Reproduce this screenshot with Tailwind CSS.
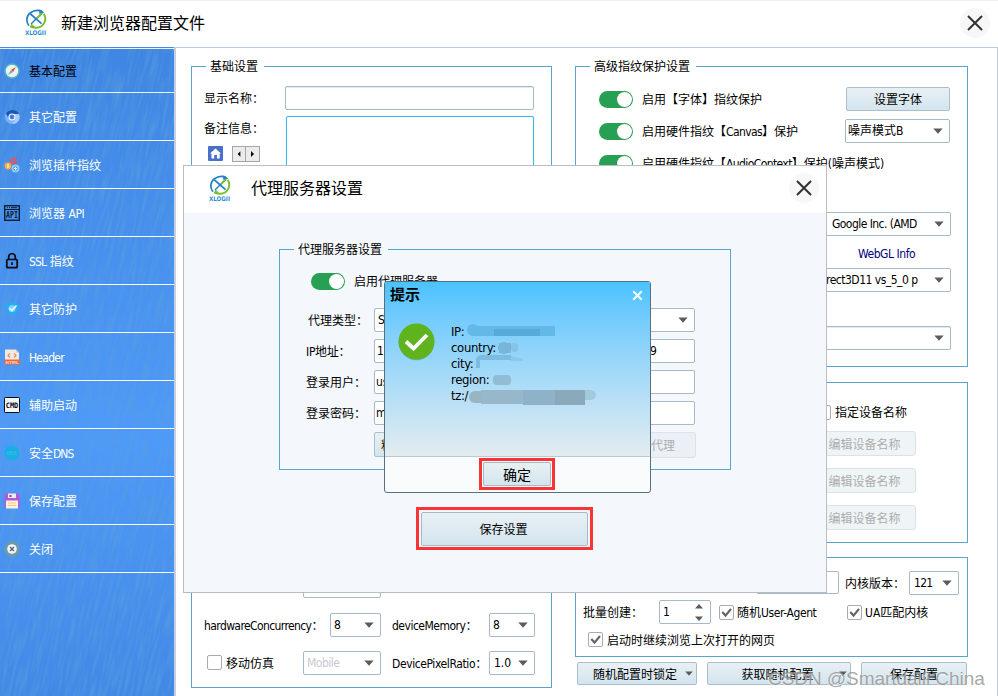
<!DOCTYPE html>
<html lang="zh-CN">
<head>
<meta charset="utf-8">
<title>新建浏览器配置文件</title>
<script src="https://cdn.jsdelivr.net/npm/@tailwindcss/browser@4"></script>
</head>
<body class="relative h-[696px] w-[998px] overflow-hidden bg-white font-['DejaVu_Sans_Condensed','Noto_Sans_CJK_SC',sans-serif] text-[12px] leading-[16px] whitespace-nowrap text-black [&_button:not(:has(svg))]:pt-[2px] [&_label]:pt-[2px] [&_legend]:pt-px [&_span[class*=ml-]]:pt-[2px]">

<svg class="hidden">
  <symbol id="logo" viewBox="0 0 24 27">
    <path d="M5 16.800A8.900 8.900 0 0 1 6.500 3.800Q12 -.2 18 2.600" fill="none" stroke="#2480c4" stroke-width="1.700"/>
    <path d="M15.500.200l5 3.200-5.400 1.400z" fill="#2480c4"/>
    <path d="M19.700 4.800A8.900 8.900 0 0 1 12 18.700Q8 18.700 6.500 17" fill="none" stroke="#79bd2c" stroke-width="1.900"/>
    <path d="M7.500 14.500l4.500 4.700-6-.7z" fill="#79bd2c"/>
    <path d="M6.500 5l11 9.700" stroke="#2480c4" stroke-width="1.700"/>
    <path d="M17.500 4.500L7 15" stroke="#2480c4" stroke-width="1.500"/>
    <path d="M13 9.200L18.500 4.200" stroke="#79bd2c" stroke-width="1.700"/>
    <text x="1" y="25.500" font-family="DejaVu Sans" font-weight="bold" font-size="6.300" textLength="21" lengthAdjust="spacingAndGlyphs" fill="#2f8fd0">XLOGII</text>
  </symbol>
  <symbol id="down" viewBox="0 0 10 6"><path d="M.3.500h9.400L5 5.700z" fill="#5c5c5c"/></symbol>
  <symbol id="tick" viewBox="0 0 15 15"><path d="M3.300 7l3.200 3.600L12 4" fill="none" stroke="#666" stroke-width="2.200"/></symbol>
  <symbol id="cross" viewBox="0 0 16 16"><path d="M1 1l14 14M15 1L1 15" stroke="#333" stroke-width="2"/></symbol>
</svg>

<header class="flex h-[47px] items-center border-t border-[#eee] bg-white">
  <svg class="mt-[-3px] ml-[24px] h-[27px] w-[24px]"><use href="#logo"/></svg>
  <h1 class="ml-[13px] text-[16px] leading-[24px]">新建浏览器配置文件</h1>
  <button class="mt-[-3px] mr-[8px] ml-auto flex size-[30px] items-center justify-center rounded-full bg-[#f7f7f7]"><svg class="size-[16px]"><use href="#cross"/></svg></button>
</header>

<div class="flex h-[649px]">
  <aside class="relative w-[174px] bg-linear-to-b from-[#3f86e2] via-[#4e9af9] via-60% to-[#4289e6]">
    <svg class="absolute inset-0 h-[649px] w-[174px]">
      <filter id="brush" x="0" y="0" width="100%" height="100%">
        <feTurbulence type="fractalNoise" baseFrequency="0.32 0.03" numOctaves="3" seed="8"/>
        <feColorMatrix values="0 0 0 0 .1  0 0 0 0 .34  0 0 0 0 .74  2 0 0 0 -.8"/>
      </filter>
      <rect x="-20" y="-60" width="420" height="780" filter="url(#brush)" transform="rotate(13)" opacity=".75"/>
    </svg>
    <nav class="relative pt-px text-white">
      <a class="flex h-[45px] items-center border-y border-white/90 pl-[4px] text-black">
        <svg class="size-[16px]" viewBox="0 0 16 16"><circle cx="8" cy="8" r="7" fill="#e8f3f3" stroke="#54b4bd" stroke-width="1.500"/><path d="M12 4L9 9 7 7z" fill="#e4443c"/><path d="M4 12l3-5 2 2z" fill="#8fa0a8"/></svg>
        <span class="ml-[9px]">基本配置</span></a>
      <a class="flex h-[48px] items-center border-b border-white pl-[4px]">
        <svg class="size-[16px]" viewBox="0 0 16 16"><circle cx="8" cy="8" r="7" fill="#7fb0f8"/><path d="M2 4.500A7.500 7.500 0 0 1 15 5H8a3.500 3.500 0 0 0-3.300 4.700z" fill="#1d57b4"/><path d="M15 5a7 7 0 0 1-6.500 10l3-5A4 4 0 0 0 10 5z" fill="#a9cbfb"/><circle cx="8" cy="8" r="3.500" fill="#fff"/><circle cx="8" cy="8" r="2.400" fill="#3b7de4"/></svg>
        <span class="ml-[9px]">其它配置</span></a>
      <a class="flex h-[48px] items-center border-b border-white pl-[4px]">
        <svg class="size-[16px]" viewBox="0 0 16 16"><circle cx="9.500" cy="4" r="2.500" fill="none" stroke="#e25563" stroke-width="2.200"/><circle cx="4" cy="9" r="3.400" fill="#f6b040"/><path d="M4 7v4" stroke="#fff0c8" stroke-width="1.300"/><circle cx="11.500" cy="11.500" r="3" fill="#3c8fe0" stroke="#8ccbfb" stroke-width="2"/><path d="M11.500 10v3M10 11.500h3" stroke="#e0f2ff"/></svg>
        <span class="ml-[9px]">浏览插件指纹</span></a>
      <a class="flex h-[48px] items-center border-b border-white pl-[4px]">
        <svg class="size-[16px]" viewBox="0 0 16 16"><rect x=".7" y=".7" width="14.600" height="14.600" fill="none" stroke="#0b1d33" stroke-width="1.400"/><path d="M1 4.500h14M3 2.700h1M5 2.700h1M7 2.700h6" stroke="#0b1d33"/><text x="8" y="12.800" text-anchor="middle" font-family="DejaVu Sans Mono" font-weight="bold" font-size="8" textLength="12" lengthAdjust="spacingAndGlyphs" fill="#0b1d33">API</text></svg>
        <span class="ml-[9px]">浏览器 <i class="not-italic tracking-[-0.4px]">API</i></span></a>
      <a class="flex h-[48px] items-center border-b border-white pl-[4px]">
        <svg class="size-[16px]" viewBox="0 0 16 16"><rect x="2.800" y="6.500" width="10.400" height="8.200" rx=".8" fill="none" stroke="#0c0c10" stroke-width="1.700"/><path d="M4.700 6.500V4a3.300 3.300 0 0 1 6.600 0v2.500" fill="none" stroke="#0c0c10" stroke-width="1.700"/><path d="M8 9.300v2.600" stroke="#0c0c10" stroke-width="1.700"/></svg>
        <span class="ml-[9px]"><i class="not-italic tracking-[-0.8px]">SSL</i> 指纹</span></a>
      <a class="flex h-[48px] items-center border-b border-white pl-[4px]">
        <svg class="size-[16px]" viewBox="0 0 16 16"><path d="M8 1c2 1.500 4.500 2 7 2-.2 6-2 9.800-7 12C3 12.800 1.200 9 1 3c2.500 0 5-.5 7-2z" fill="#29aaf5"/><circle cx="8" cy="7.500" r="3.500" fill="#7fd0fb"/><path d="M5.500 7.300L7.800 9.500 12.500 4.500" fill="none" stroke="#e8f7ff" stroke-width="1.700"/></svg>
        <span class="ml-[9px]">其它防护</span></a>
      <a class="flex h-[48px] items-center border-b border-white pl-[4px]">
        <svg class="size-[16px]" viewBox="0 0 16 16"><path d="M1 .5h11L15 3.500v8H1z" fill="#efe9e2"/><path d="M12 .5l3 3h-3z" fill="#cfc5bb"/><path d="M6 4.500L4 6.500l2 2M10 4.500l2 2-2 2" fill="none" stroke="#e98a55" stroke-width="1.200"/><rect x=".3" y="10.500" width="15.400" height="5" fill="#ee6a3c"/><text x="8" y="14.800" text-anchor="middle" font-family="DejaVu Sans" font-weight="bold" font-size="4.200" fill="#fbd4c2">HTML</text></svg>
        <span class="ml-[9px] tracking-[-0.75px]">Header</span></a>
      <a class="flex h-[48px] items-center border-b border-white pl-[4px]">
        <svg class="size-[16px]" viewBox="0 0 16 16"><rect x=".5" y=".5" width="15" height="15" rx=".8" fill="#f1f4f8" stroke="#0a0a0a"/><text x="8" y="10.700" text-anchor="middle" font-family="DejaVu Sans Mono" font-weight="bold" font-size="7.400" textLength="12.500" lengthAdjust="spacingAndGlyphs" fill="#0a0a0a">CMD</text></svg>
        <span class="ml-[9px]">辅助启动</span></a>
      <a class="flex h-[48px] items-center border-b border-white pl-[4px]">
        <svg class="size-[16px]" viewBox="0 0 16 16"><circle cx="8" cy="8" r="6.600" fill="#2ba3ea" stroke="#12b5de" stroke-width="1.800" stroke-dasharray="4 1"/><path d="M3 3.500h10M3 12.500h10M8 1v3M8 12v3" stroke="#12b5de"/><text x="8" y="10" text-anchor="middle" font-family="DejaVu Sans Mono" font-weight="bold" font-size="5.500" fill="#13cde2">DNS</text></svg>
        <span class="ml-[9px]">安全<i class="not-italic tracking-[-1px]">DNS</i></span></a>
      <a class="flex h-[48px] items-center border-b border-white pl-[4px]">
        <svg class="size-[16px]" viewBox="0 0 16 16"><path d="M.7 1.500Q.7.500 1.700.500H14l1.500 1.500v12q0 1-1 1H1.700q-1 0-1-1z" fill="#b558d0"/><rect x="4" y=".5" width="8" height="4.500" fill="#ece9f2"/><rect x="5.500" y="2" width="2" height="2" fill="#7a4b96"/><rect x="2" y="7.500" width="12" height="8" fill="#fbf1dc"/><path d="M4 10h8M4 12.500h8" stroke="#f3c888"/></svg>
        <span class="ml-[9px]">保存配置</span></a>
      <a class="flex h-[48px] items-center border-b border-white pl-[4px]">
        <svg class="size-[16px]" viewBox="0 0 16 16"><circle cx="8" cy="8" r="7.800" fill="#6f98ab"/><circle cx="8" cy="8" r="4.800" fill="#f4f6f7"/><path d="M6 6l4 4M10 6l-4 4" stroke="#5b6b75" stroke-width="1.500"/></svg>
        <span class="ml-[9px]">关闭</span></a>
    </nav>
  </aside>

  <main class="flex flex-1 border-t border-r border-l-2 border-[#bccbdc] border-l-[#c6d0e4] pt-[10px] pl-[15px]">
    <fieldset class="h-[630px] w-[361px] border border-[#55a5cd]">
      <legend class="ml-[14px] h-[17px] pr-[6px] pl-[4px] leading-[17px]">基础设置</legend>
      <div class="flex h-[612px] flex-col justify-between pt-[11px] pb-[12px] pl-[12px]">
        <div>
          <div class="flex h-[24px] items-center">
            <label class="w-[81px]">显示名称：</label>
            <div class="h-[24px] w-[249px] rounded-[2px] border border-[#a5b9c6] shadow-[inset_0_1px_0_#e4eaee]"></div>
          </div>
          <div class="mt-[6px] flex">
            <div class="w-[82px] pt-[5px]">
              <label>备注信息：</label>
              <div class="mt-[9px] flex pl-[4px]">
                <svg class="size-[15px]" viewBox="0 0 15 15"><rect width="15" height="15" rx="1" fill="#4a6fcd"/><path d="M7.500 2.500L13 7.500h-1.300V12.500H9V9H6.200v3.500H3.500v-5H2z" fill="#fff"/></svg>
                <div class="ml-[9px] flex h-[16px] w-[28px] border border-[#a6a6a6] bg-[#ececec]">
                  <svg class="h-[14px] w-[13px] border-r border-[#a6a6a6]" viewBox="0 0 13 14"><path d="M8 4v6L5 7z"/></svg>
                  <svg class="h-[14px] w-[13px]" viewBox="0 0 13 14"><path d="M5 4v6l3-3z"/></svg>
                </div>
              </div>
            </div>
            <div class="h-[64px] w-[248px] rounded-[2px] border border-[#38b4ee] shadow-[0_0_1px_#8fd6f7]"></div>
          </div>
        </div>
        <div>
          <div class="flex h-[24px]">
            <div class="ml-[99px] h-[25px] w-[78px] rounded-[2px] border border-[#a5b9c6]"></div>
            <div class="mt-[5px] ml-[32px] size-[15px] rounded-[2px] border border-[#aaa]"></div>
          </div>
          <div class="mt-[16px] flex h-[24px] items-center">
            <label class="w-[126px]"><i class="not-italic tracking-[-0.6px]">hardwareConcurrency</i>：</label>
            <div class="flex h-[24px] w-[51px] items-center justify-between rounded-[2px] border border-[#a5b9c6] pr-[6px] pl-[3px]"><span>8</span><svg class="h-[6px] w-[10px]"><use href="#down"/></svg></div>
            <label class="ml-[11px] w-[97px]"><i class="not-italic tracking-[-0.5px]">deviceMemory</i>：</label>
            <div class="flex h-[24px] w-[46px] items-center justify-between rounded-[2px] border border-[#a5b9c6] pr-[6px] pl-[3px]"><span>8</span><svg class="h-[6px] w-[10px]"><use href="#down"/></svg></div>
          </div>
          <div class="mt-[13px] flex h-[25px] items-center">
            <div class="ml-[3px] size-[15px] rounded-[2px] border border-[#aaa]"></div>
            <label class="ml-[4px] w-[77px]">移动仿真</label>
            <div class="flex h-[24px] w-[78px] items-center justify-between rounded-[2px] border border-[#a5b9c6] pr-[6px] pl-[3px]"><span class="tracking-[-0.5px] text-[#c8c8cf]">Mobile</span><svg class="h-[6px] w-[10px]"><use href="#down"/></svg></div>
            <label class="ml-[11px] w-[97px]"><i class="not-italic tracking-[-0.4px]">DevicePixelRatio</i>：</label>
            <div class="flex h-[24px] w-[46px] items-center justify-between rounded-[2px] border border-[#a5b9c6] pr-[6px] pl-[4px]"><span>1.0</span><svg class="h-[6px] w-[10px]"><use href="#down"/></svg></div>
          </div>
        </div>
      </div>
    </fieldset>

    <div class="ml-[23px] w-[393px]">
      <fieldset class="h-[309px] border border-[#55a5cd]">
        <legend class="ml-[14px] h-[17px] pr-[6px] pl-[4px] leading-[17px]">高级指纹保护设置</legend>
        <div class="pt-[12px] pr-[16px] pl-[23px]">
          <div class="flex h-[24px] items-center">
            <div class="flex h-[17px] w-[34px] justify-end rounded-full bg-[#28a053] p-px"><div class="size-[15px] rounded-full bg-white"></div></div>
            <span class="ml-[9px]">启用【字体】指纹保护</span>
            <button class="ml-auto h-[24px] w-[104px] mr-px rounded-[2px] border border-[#a9bfcd] bg-linear-to-b from-[#e9f0f4] to-[#d3e5ee]">设置字体</button>
          </div>
          <div class="mt-[8px] flex h-[24px] items-center">
            <div class="flex h-[17px] w-[34px] justify-end rounded-full bg-[#28a053] p-px"><div class="size-[15px] rounded-full bg-white"></div></div>
            <span class="ml-[9px]">启用硬件指纹【<i class="not-italic tracking-[-0.6px]">Canvas</i>】保护</span>
            <div class="mr-px ml-auto flex h-[24px] w-[105px] items-center justify-between rounded-[2px] border border-[#a5b9c6] pr-[6px] pl-[2px]"><span>噪声模式B</span><svg class="h-[6px] w-[10px]"><use href="#down"/></svg></div>
          </div>
          <div class="mt-[8px] flex h-[24px] items-center">
            <div class="flex h-[17px] w-[34px] justify-end rounded-full bg-[#28a053] p-px"><div class="size-[15px] rounded-full bg-white"></div></div>
            <span class="ml-[9px]">启用硬件指纹【<i class="not-italic tracking-[-0.6px]">AudioContext</i>】保护(噪声模式)</span>
          </div>
          <div class="mt-[37px] ml-auto flex h-[24px] w-[134px] items-center justify-between rounded-[2px] border border-[#a5b9c6] pr-[6px] pl-[14px]"><span class="tracking-[-0.55px]">Google Inc. (AMD</span><svg class="h-[6px] w-[10px]"><use href="#down"/></svg></div>
          <div class="mt-[10px] pl-[259px] tracking-[-0.45px] text-[#000080]">WebGL Info</div>
          <div class="mt-[6px] ml-auto flex h-[24px] w-[134px] items-center justify-between rounded-[2px] border border-[#a5b9c6] pr-[6px] pl-[8px]"><span class="tracking-[-0.5px]">rect3D11 vs_5_0 p</span><svg class="h-[6px] w-[10px]"><use href="#down"/></svg></div>
          <div class="mt-[34px] ml-auto flex h-[24px] w-[134px] items-center justify-end rounded-[2px] border border-[#a5b9c6] pr-[6px] shadow-[inset_0_1px_0_#e4eaee]"><svg class="h-[6px] w-[10px]"><use href="#down"/></svg></div>
        </div>
      </fieldset>

      <section class="mt-[15px] flex h-[161px] flex-col border border-[#55a5cd] pt-[21px] pl-[237px]">
        <div class="flex h-[17px] items-center pl-[3px]">
          <div class="size-[15px] rounded-[2px] border border-[#aaa]"></div><span class="ml-[4px] mt-[-2px]">指定设备名称</span>
        </div>
        <button class="mt-[10px] h-[25px] w-[103px] rounded-[3px] border border-[#dbe3e8] bg-[#eff4f7] text-[#adadad]">编辑设备名称</button>
        <button class="mt-[12px] h-[25px] w-[103px] rounded-[3px] border border-[#dbe3e8] bg-[#eff4f7] text-[#adadad]">编辑设备名称</button>
        <button class="mt-[12px] h-[25px] w-[103px] rounded-[3px] border border-[#dbe3e8] bg-[#eff4f7] text-[#adadad]">编辑设备名称</button>
      </section>

      <section class="mt-[14px] h-[100px] border border-[#55a5cd] pt-[12px]">
        <div class="flex h-[26px] items-center pr-[8px]">
          <div class="mt-[-2px] ml-[180px] h-[23px] w-[83px] rounded-[2px] border border-[#a5b9c6]"></div>
          <label class="ml-[6px]">内核版本：</label>
          <div class="ml-auto flex h-[24px] w-[50px] items-center justify-between rounded-[2px] border border-[#a5b9c6] pr-[6px] pl-[4px]"><span class="tracking-[-0.7px]">121</span><svg class="h-[6px] w-[10px]"><use href="#down"/></svg></div>
        </div>
        <div class="mt-[4px] flex h-[24px] items-center pl-[7px]">
          <label class="w-[76px]">批量创建：</label>
          <div class="flex h-[24px] w-[52px] items-center justify-between rounded-[2px] border border-[#a5b9c6] pr-[7px] pl-[3px]"><span>1</span>
            <svg class="h-[17px] w-[8px]" viewBox="0 0 8 17"><path d="M0 4.500h8L4 0zM0 12.500h8L4 17z" fill="#5c5c5c"/></svg></div>
          <div class="ml-[8px] size-[15px] rounded-[2px] border border-[#aaa]"><svg class="-m-px size-[15px]"><use href="#tick"/></svg></div>
          <span class="ml-[3px] w-[110px]">随机<i class="not-italic tracking-[-0.4px]">User-Agent</i></span>
          <div class="size-[15px] rounded-[2px] border border-[#aaa]"><svg class="-m-px size-[15px]"><use href="#tick"/></svg></div>
          <span class="ml-[3px]">UA匹配内核</span>
        </div>
        <div class="mt-[7px] flex h-[17px] items-center pl-[12px]">
          <div class="size-[15px] rounded-[2px] border border-[#aaa]"><svg class="-m-px size-[15px]"><use href="#tick"/></svg></div>
          <span class="ml-[4px]">启动时继续浏览上次打开的网页</span>
        </div>
      </section>

      <div class="mt-[5px] flex h-[23px] gap-[10px] pl-[2px]">
        <button class="flex w-[120px] items-center rounded-[2px] border border-[#a9bfcd] bg-linear-to-b from-[#e9f0f4] to-[#d3e5ee] pr-[3px]"><span class="flex-1 pt-[2px] pl-[7px]">随机配置时锁定</span><svg class="h-[5px] w-[8px]" viewBox="0 0 10 6"><path d="M.3.500h9.400L5 5.700z" fill="#5c5c5c"/></svg></button>
        <button class="flex w-[144px] items-center rounded-[2px] border border-[#a9bfcd] bg-linear-to-b from-[#e9f0f4] to-[#d3e5ee] pr-[3px]"><span class="flex-1 pt-[2px] pl-[8px]">获取随机配置</span><svg class="h-[5px] w-[8px]" viewBox="0 0 10 6"><path d="M.3.500h9.400L5 5.700z" fill="#5c5c5c"/></svg></button>
        <button class="w-[106px] rounded-[2px] border border-[#a9bfcd] bg-linear-to-b from-[#e9f0f4] to-[#d3e5ee]">保存配置</button>
      </div>
    </div>
  </main>
</div>

<div class="absolute top-[667px] left-[768px] font-['Liberation_Sans',sans-serif] text-[19px] leading-[24px] tracking-[-0.05px] text-[#8a8a8a]/75 [text-shadow:0_1px_1px_#ffffffb0]">CSDN @Smartdaili China</div>

<section class="absolute top-[165px] left-[183px] h-[428px] w-[644px] border border-[#b9bdc1] bg-[#f4f7fc]">
  <header class="flex h-[47px] items-center bg-white">
    <svg class="mt-[-3px] ml-[24px] h-[27px] w-[24px]"><use href="#logo"/></svg>
    <h2 class="mt-[-2px] ml-[19px] text-[16px] leading-[24px]">代理服务器设置</h2>
    <button class="mt-[-3px] mr-[7px] ml-auto flex size-[30px] items-center justify-center rounded-full bg-[#f7f7f7]"><svg class="size-[16px]"><use href="#cross"/></svg></button>
  </header>
  <fieldset class="mt-[28px] ml-[95px] h-[229px] w-[452px] border border-[#55a5cd]">
    <legend class="ml-[14px] h-[17px] pr-[6px] pl-[4px] leading-[17px]">代理服务器设置</legend>
    <div class="pl-[26px]">
      <div class="flex h-[46px] items-center pl-[5px]">
        <div class="flex h-[17px] w-[34px] justify-end rounded-full bg-[#28a053] p-px"><div class="size-[15px] rounded-full bg-white"></div></div>
        <span class="ml-[9px]">启用代理服务器</span>
      </div>
      <div class="mt-[3px] flex h-[25px] items-center">
        <label class="w-[68px] pl-[2px]">代理类型：</label>
        <div class="flex h-[24px] w-[321px] items-center justify-between rounded-[2px] border border-[#a5b9c6] bg-white pr-[6px] pl-[3px]"><span>SOCKS5</span><svg class="h-[6px] w-[10px]"><use href="#down"/></svg></div>
      </div>
      <div class="mt-[7px] flex h-[24px] items-center">
        <label class="w-[68px] tracking-[-0.3px]">IP地址：</label>
        <div class="flex h-[24px] w-[210px] items-center rounded-[2px] border border-[#a5b9c6] bg-white pl-[2px]">127.0.0.1</div>
        <div class="ml-[11px] flex h-[24px] w-[100px] items-center rounded-[2px] border border-[#a5b9c6] bg-white pl-[54px]">9</div>
      </div>
      <div class="mt-[7px] flex h-[24px] items-center">
        <label class="w-[68px]">登录用户：</label>
        <div class="flex h-[24px] w-[321px] items-center rounded-[2px] border border-[#a5b9c6] bg-white pl-px">user</div>
      </div>
      <div class="mt-[7px] flex h-[24px] items-center">
        <label class="w-[68px]">登录密码：</label>
        <div class="flex h-[24px] w-[321px] items-center rounded-[2px] border border-[#a5b9c6] bg-white pl-px">m</div>
      </div>
      <div class="mt-[7px] flex h-[26px] justify-between pr-[34px] pl-[68px]">
        <button class="h-[25px] w-[90px] rounded-[2px] border border-[#a9bfcd] bg-linear-to-b from-[#e9f0f4] to-[#d3e5ee] pl-[6px] text-left">粘贴代理</button>
        <button class="h-[26px] w-[90px] rounded-[3px] border border-[#dbe3e8] bg-[#eaf0f6] pr-[20px] text-right text-[#adadad]">检测代理</button>
      </div>
    </div>
  </fieldset>
  <div class="mt-[37px] ml-[232px] h-[43px] w-[177px] border-3 border-[#fa3434] p-[2px]">
    <button class="h-[34px] w-full rounded-[2px] border border-[#a9b9c3] bg-linear-to-b from-[#e9f0f4] to-[#d3e5ee] pr-[2px]">保存设置</button>
  </div>
</section>

<section class="absolute top-[281px] left-[384px] flex h-[212px] w-[267px] flex-col overflow-hidden rounded-[3px] border border-[#55707f] bg-[#fafbfc]">
  <div class="h-[175px] border-b border-[#b7cad6] bg-linear-to-b from-[#49c2ff] to-[#e3ecf0]">
    <div class="flex h-[26px] items-center justify-between pr-[7px] pl-[5px]">
      <h3 class="text-[15px] leading-[20px] font-bold">提示</h3>
      <svg class="size-[11px]" viewBox="0 0 11 11"><path d="M1.200 1.200l8.600 8.600M9.800 1.200L1.200 9.800" stroke="#f2fbff" stroke-width="2.200"/></svg>
    </div>
    <div class="flex pl-[13px]">
      <svg class="mt-[15px] h-[38px] w-[37px]" viewBox="0 0 37 38"><circle cx="18.500" cy="19.500" r="17.800" fill="#447f7f" opacity=".45"/><circle cx="18.500" cy="18.500" r="18" fill="#5fb31c"/><path d="M8 18.500l7.500 7L29 12" fill="none" stroke="#fff" stroke-width="3.800"/></svg>
      <div class="relative ml-[16px] pt-[16px] text-[13px] tracking-[-0.35px]">
        <svg class="absolute top-[8px] left-0 h-[84px] w-[150px]" viewBox="0 0 150 84">
          <g fill="#62b9e8"><circle cx="22" cy="14" r="6"/><rect x="22" y="10" width="82" height="10"/></g><rect x="43" y="13" width="46" height="7" fill="#54aadb"/>
          <g fill="#78b5d7"><circle cx="53" cy="32" r="6"/><rect x="48" y="27" width="12" height="10"/></g><rect x="60" y="27" width="7" height="9" rx="3" fill="#85c4e6"/>
          <path d="M25 52V43q1-4 6-4h29v5H29v8z" fill="#7dbcdf"/><path d="M60 40l12 3v2H60z" fill="#8ac9eb"/>
          <rect x="42" y="59" width="18" height="10" rx="4" fill="#91bcd3"/>
        </svg>
        <svg class="absolute top-[78px] left-0 h-[20px] w-[150px]" viewBox="0 0 150 20">
          <rect x="18" y="5" width="30" height="12" rx="6" fill="#98b5c4"/><rect x="30" y="4" width="52" height="14" fill="#96b8ca"/><rect x="72" y="4" width="33" height="15" fill="#8eb3c8"/><rect x="104" y="4" width="30" height="15" fill="#8aa9bb"/><path d="M134 4h6q5 1 5 5t-5 5h-6z" fill="#a3c9dd"/>
        </svg>
        <div class="relative">IP:<br>country:<br>city:<br>region:<br>tz:/</div>
      </div>
    </div>
  </div>
  <div class="mt-px ml-[94px] h-[32px] w-[76px] border-3 border-[#fa3434] p-px">
    <button class="h-[24px] w-full rounded-[2px] border border-[#a9b9c3] bg-linear-to-b from-[#e9f0f4] to-[#d3e5ee] text-[14px] leading-[20px]">确定</button>
  </div>
</section>
</body>
</html>
